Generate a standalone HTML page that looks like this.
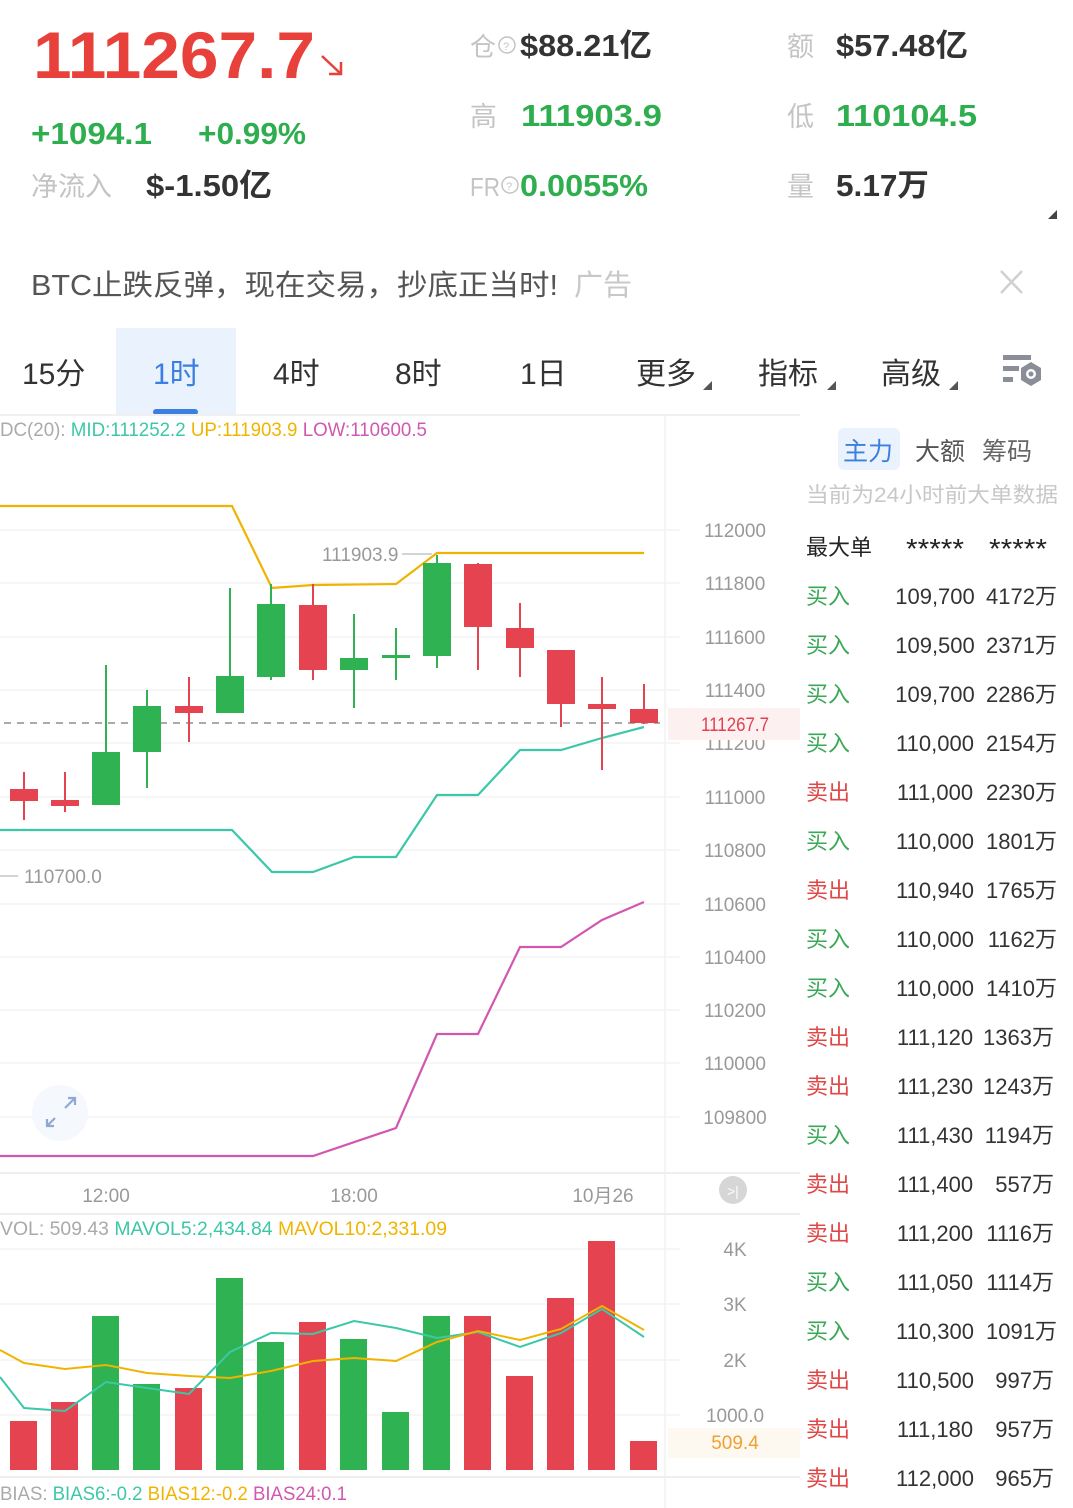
<!DOCTYPE html>
<html><head><meta charset="utf-8"><style>
html,body{margin:0;padding:0;background:#fff;width:1073px;height:1508px;overflow:hidden}
svg{display:block}
text{font-family:"Liberation Sans","Noto Sans CJK SC",sans-serif}
</style></head><body>
<svg width="1073" height="1508" viewBox="0 0 1073 1508" xmlns="http://www.w3.org/2000/svg">
<!-- header -->
<text x="33" y="78" font-size="66" font-weight="bold" fill="#e8403a" textLength="282" lengthAdjust="spacingAndGlyphs">111267.7</text>
<path d="M322 56 L341 74 M341 62 V74 H329" stroke="#e8403a" stroke-width="2.5" fill="none"/>
<text x="31" y="144" font-size="31" font-weight="bold" fill="#2fae4f" textLength="121" lengthAdjust="spacingAndGlyphs">+1094.1</text>
<text x="198" y="144" font-size="31" font-weight="bold" fill="#2fae4f" textLength="108" lengthAdjust="spacingAndGlyphs">+0.99%</text>
<text x="31" y="196" font-size="27" fill="#c4c4c4">净流入</text>
<text x="146" y="196" font-size="31" font-weight="bold" fill="#333" textLength="126" lengthAdjust="spacingAndGlyphs">$-1.50亿</text>

<text x="470" y="56" font-size="26" fill="#c4c4c4">仓</text>
<circle cx="507" cy="45" r="8" fill="none" stroke="#c4c4c4" stroke-width="1.5"/><text x="503" y="50" font-size="11" fill="#c4c4c4">?</text>
<text x="520" y="56" font-size="31" font-weight="bold" fill="#333" textLength="132" lengthAdjust="spacingAndGlyphs">$88.21亿</text>
<text x="470" y="126" font-size="27" fill="#c4c4c4">高</text>
<text x="521" y="126" font-size="31" font-weight="bold" fill="#2fae4f" textLength="141" lengthAdjust="spacingAndGlyphs">111903.9</text>
<text x="470" y="196" font-size="26" fill="#c4c4c4" textLength="30" lengthAdjust="spacingAndGlyphs">FR</text>
<circle cx="510" cy="185" r="8" fill="none" stroke="#c4c4c4" stroke-width="1.5"/><text x="506" y="190" font-size="11" fill="#c4c4c4">?</text>
<text x="520" y="196" font-size="31" font-weight="bold" fill="#2fae4f" textLength="128" lengthAdjust="spacingAndGlyphs">0.0055%</text>

<text x="787" y="56" font-size="27" fill="#c4c4c4">额</text>
<text x="836" y="56" font-size="31" font-weight="bold" fill="#333" textLength="132" lengthAdjust="spacingAndGlyphs">$57.48亿</text>
<text x="787" y="126" font-size="27" fill="#c4c4c4">低</text>
<text x="836" y="126" font-size="31" font-weight="bold" fill="#2fae4f" textLength="141" lengthAdjust="spacingAndGlyphs">110104.5</text>
<text x="787" y="196" font-size="27" fill="#c4c4c4">量</text>
<text x="836" y="196" font-size="31" font-weight="bold" fill="#333" textLength="93" lengthAdjust="spacingAndGlyphs">5.17万</text>
<path d="M1057 210 L1057 219 L1048 219 Z" fill="#444"/>

<text x="31" y="295" font-size="29" fill="#555" textLength="527" lengthAdjust="spacingAndGlyphs">BTC止跌反弹，现在交易，抄底正当时!</text>
<text x="574" y="295" font-size="29" fill="#c8c8c8">广告</text>
<path d="M1001 271 L1022 293 M1022 271 L1001 293" stroke="#d0d0d0" stroke-width="2.5"/>

<!-- tabs -->
<rect x="116" y="328" width="120" height="86" fill="#eaf2fd"/>
<rect x="153" y="409" width="45" height="6" rx="3" fill="#3b7fe0"/>
<g font-size="30" fill="#333">
<text x="22" y="384">15分</text>
<text x="153" y="384" fill="#3b7fe0">1时</text>
<text x="273" y="384">4时</text>
<text x="395" y="384">8时</text>
<text x="520" y="384">1日</text>
<text x="636" y="384">更多</text>
<text x="758" y="384">指标</text>
<text x="881" y="384">高级</text>
</g>
<path d="M712 381 V390 H703 Z M836 381 V390 H827 Z M958 381 V390 H949 Z" fill="#555"/>
<g fill="#8a8e99"><rect x="1003" y="355" width="28" height="5"/><rect x="1003" y="366" width="16" height="5"/><rect x="1003" y="377" width="10" height="5"/></g>
<path d="M1031 362 L1041 368 V380 L1031 386 L1021 380 V368 Z" fill="#8a8e99"/>
<circle cx="1031" cy="374" r="5" fill="#fff"/><circle cx="1031" cy="374" r="2.5" fill="#8a8e99"/>

<!-- separators -->
<line x1="0" y1="415" x2="800" y2="415" stroke="#f0f0f0" stroke-width="2"/>
<line x1="665" y1="415" x2="665" y2="1508" stroke="#f2f2f2" stroke-width="1.5"/>

<text x="0" y="436" font-size="19" fill="#aaa" textLength="427" lengthAdjust="spacingAndGlyphs"><tspan>DC(20): </tspan><tspan fill="#3cc8a8">MID:111252.2 </tspan><tspan fill="#f0b400">UP:111903.9 </tspan><tspan fill="#d058b0">LOW:110600.5</tspan></text>

<!-- grid -->
<g stroke="#f3f3f3" stroke-width="1.5">
<line x1="0" y1="530" x2="680" y2="530"/><line x1="0" y1="583" x2="680" y2="583"/><line x1="0" y1="637" x2="680" y2="637"/><line x1="0" y1="690" x2="680" y2="690"/><line x1="0" y1="743" x2="680" y2="743"/><line x1="0" y1="797" x2="680" y2="797"/><line x1="0" y1="850" x2="680" y2="850"/><line x1="0" y1="904" x2="680" y2="904"/><line x1="0" y1="957" x2="680" y2="957"/><line x1="0" y1="1010" x2="680" y2="1010"/><line x1="0" y1="1063" x2="680" y2="1063"/><line x1="0" y1="1117" x2="680" y2="1117"/>
<line x1="0" y1="1173" x2="800" y2="1173" stroke="#eee" stroke-width="2"/>
<line x1="0" y1="1214" x2="800" y2="1214" stroke="#eee" stroke-width="2"/>
<line x1="0" y1="1249" x2="680" y2="1249"/><line x1="0" y1="1304" x2="680" y2="1304"/><line x1="0" y1="1360" x2="680" y2="1360"/><line x1="0" y1="1415" x2="680" y2="1415"/>
<line x1="0" y1="1477" x2="800" y2="1477" stroke="#eee" stroke-width="2"/>
</g>
<g font-size="19" fill="#999" text-anchor="middle">
<text x="735" y="537">112000</text><text x="735" y="590">111800</text><text x="735" y="644">111600</text><text x="735" y="697">111400</text><text x="735" y="750">111200</text><text x="735" y="804">111000</text><text x="735" y="857">110800</text><text x="735" y="911">110600</text><text x="735" y="964">110400</text><text x="735" y="1017">110200</text><text x="735" y="1070">110000</text><text x="735" y="1124">109800</text>
<text x="106" y="1202">12:00</text><text x="354" y="1202">18:00</text><text x="603" y="1202">10月26</text>
<text x="735" y="1256">4K</text><text x="735" y="1311">3K</text><text x="735" y="1367">2K</text><text x="735" y="1422">1000.0</text>
</g>
<rect x="668" y="708" width="132" height="32" fill="#fdf0f0"/>
<text x="735" y="731" font-size="19" fill="#e04050" text-anchor="middle" textLength="68" lengthAdjust="spacingAndGlyphs">111267.7</text>
<rect x="668" y="1428" width="132" height="30" fill="#fdf8f0"/>
<text x="735" y="1449" font-size="19" fill="#f0a030" text-anchor="middle">509.4</text>
<circle cx="733" cy="1190" r="14" fill="#d6d6d6"/><text x="727" y="1196" font-size="14" fill="#fff">&gt;|</text>

<!-- DC lines -->
<polyline points="0,506 232,506 272,588 313,585 396,584 437,553 644,553" fill="none" stroke="#f0b400" stroke-width="2.2"/>
<polyline points="0,830 232,830 272,872 313,872 354,857 396,857 437,795 478,795 520,750 561,750 602,738 644,727" fill="none" stroke="#3cc8a8" stroke-width="2.2"/>
<polyline points="0,1156 313,1156 396,1128 437,1034 478,1034 520,947 561,947 602,920 644,902" fill="none" stroke="#d058b0" stroke-width="2.2"/>
<line x1="4" y1="723" x2="660" y2="723" stroke="#aaa" stroke-width="2" stroke-dasharray="7,6"/>
<text x="322" y="561" font-size="19" fill="#999">111903.9</text><line x1="402" y1="554" x2="432" y2="554" stroke="#aaa"/>
<line x1="0" y1="876" x2="18" y2="876" stroke="#aaa"/><text x="24" y="883" font-size="19" fill="#999">110700.0</text>

<!-- candles -->
<g>
<g fill="#e5434f" stroke="#e5434f">
<line x1="24" y1="772" x2="24" y2="820" stroke-width="2"/><rect x="10" y="789" width="28" height="12" stroke="none"/>
<line x1="65" y1="772" x2="65" y2="812" stroke-width="2"/><rect x="51" y="800" width="28" height="6" stroke="none"/>
<line x1="189" y1="677" x2="189" y2="742" stroke-width="2"/><rect x="175" y="706" width="28" height="7" stroke="none"/>
<line x1="313" y1="584" x2="313" y2="680" stroke-width="2"/><rect x="299" y="605" width="28" height="65" stroke="none"/>
<line x1="478" y1="563" x2="478" y2="670" stroke-width="2"/><rect x="464" y="564" width="28" height="63" stroke="none"/>
<line x1="520" y1="603" x2="520" y2="677" stroke-width="2"/><rect x="506" y="628" width="28" height="20" stroke="none"/>
<line x1="561" y1="650" x2="561" y2="727" stroke-width="2"/><rect x="547" y="650" width="28" height="54" stroke="none"/>
<line x1="602" y1="677" x2="602" y2="770" stroke-width="2"/><rect x="588" y="704" width="28" height="5" stroke="none"/>
<line x1="644" y1="684" x2="644" y2="724" stroke-width="2"/><rect x="630" y="709" width="28" height="14" stroke="none"/>
</g>
<g fill="#2fb352" stroke="#2fb352">
<line x1="106" y1="665" x2="106" y2="805" stroke-width="2"/><rect x="92" y="752" width="28" height="53" stroke="none"/>
<line x1="147" y1="690" x2="147" y2="788" stroke-width="2"/><rect x="133" y="706" width="28" height="46" stroke="none"/>
<line x1="230" y1="588" x2="230" y2="713" stroke-width="2"/><rect x="216" y="676" width="28" height="37" stroke="none"/>
<line x1="271" y1="584" x2="271" y2="680" stroke-width="2"/><rect x="257" y="604" width="28" height="73" stroke="none"/>
<line x1="354" y1="614" x2="354" y2="708" stroke-width="2"/><rect x="340" y="658" width="28" height="12" stroke="none"/>
<line x1="396" y1="628" x2="396" y2="680" stroke-width="2"/><rect x="382" y="655" width="28" height="3" stroke="none"/>
<line x1="437" y1="555" x2="437" y2="668" stroke-width="2"/><rect x="423" y="563" width="28" height="93" stroke="none"/>
</g>
</g>
<!-- expand icon -->
<circle cx="60" cy="1113" r="28" fill="#f5f8fd"/>
<path d="M65 1108 L75 1098 M68 1098 H75 V1105 M55 1118 L47 1126 M47 1119 V1126 H54" stroke="#8fa8d4" stroke-width="2.2" fill="none"/>

<!-- volume -->
<text x="0" y="1235" font-size="19" fill="#aaa" textLength="447" lengthAdjust="spacingAndGlyphs"><tspan>VOL: 509.43 </tspan><tspan fill="#3cc8a8">MAVOL5:2,434.84 </tspan><tspan fill="#f0b400">MAVOL10:2,331.09</tspan></text>
<g fill="#e5434f">
<rect x="10" y="1421" width="27" height="49"/><rect x="51" y="1402" width="27" height="68"/><rect x="175" y="1388" width="27" height="82"/><rect x="299" y="1322" width="27" height="148"/><rect x="464" y="1316" width="27" height="154"/><rect x="506" y="1376" width="27" height="94"/><rect x="547" y="1298" width="27" height="172"/><rect x="588" y="1241" width="27" height="229"/><rect x="630" y="1441" width="27" height="29"/>
</g>
<g fill="#2fb352">
<rect x="92" y="1316" width="27" height="154"/><rect x="133" y="1384" width="27" height="86"/><rect x="216" y="1278" width="27" height="192"/><rect x="257" y="1342" width="27" height="128"/><rect x="340" y="1339" width="27" height="131"/><rect x="382" y="1412" width="27" height="58"/><rect x="423" y="1316" width="27" height="154"/>
</g>
<polyline points="0,1377 24,1408 65,1411 106,1382 147,1388 189,1394 230,1352 271,1333 313,1334 354,1321 396,1328 437,1338 478,1332 520,1347 561,1333 602,1309 644,1337" fill="none" stroke="#3cc8a8" stroke-width="2"/>
<polyline points="0,1350 24,1363 65,1369 106,1365 147,1373 189,1376 230,1378 271,1371 313,1361 354,1358 396,1361 437,1342 478,1331 520,1340 561,1329 602,1306 644,1330" fill="none" stroke="#f0b400" stroke-width="2"/>
<text x="0" y="1500" font-size="19" fill="#aaa" textLength="347" lengthAdjust="spacingAndGlyphs"><tspan>BIAS: </tspan><tspan fill="#3cc8a8">BIAS6:-0.2 </tspan><tspan fill="#f0b400">BIAS12:-0.2 </tspan><tspan fill="#d058b0">BIAS24:0.1</tspan></text>

<!-- right panel -->
<rect x="838" y="428" width="62" height="42" rx="6" fill="#eaf2fd"/>
<text x="843" y="460" font-size="25" fill="#3b7fe0">主力</text>
<text x="915" y="460" font-size="25" fill="#555">大额</text>
<text x="982" y="460" font-size="25" fill="#666">筹码</text>
<text x="806" y="502" font-size="21" fill="#c8c8c8" textLength="252" lengthAdjust="spacingAndGlyphs">当前为24小时前大单数据</text>
<text x="806" y="555" font-size="22" fill="#222">最大单</text>
<text x="935" y="558" font-size="28" fill="#222" text-anchor="middle" textLength="58" lengthAdjust="spacingAndGlyphs">*****</text>
<text x="1018" y="558" font-size="28" fill="#222" text-anchor="middle" textLength="58" lengthAdjust="spacingAndGlyphs">*****</text>
<g font-size="22">
<text x="806" y="604" fill="#3aa856">买入</text><text x="935" y="604" fill="#333" text-anchor="middle">109,700</text><text x="1057" y="604" fill="#333" text-anchor="end">4172万</text>
<text x="806" y="653" fill="#3aa856">买入</text><text x="935" y="653" fill="#333" text-anchor="middle">109,500</text><text x="1057" y="653" fill="#333" text-anchor="end">2371万</text>
<text x="806" y="702" fill="#3aa856">买入</text><text x="935" y="702" fill="#333" text-anchor="middle">109,700</text><text x="1057" y="702" fill="#333" text-anchor="end">2286万</text>
<text x="806" y="751" fill="#3aa856">买入</text><text x="935" y="751" fill="#333" text-anchor="middle">110,000</text><text x="1057" y="751" fill="#333" text-anchor="end">2154万</text>
<text x="806" y="800" fill="#e04848">卖出</text><text x="935" y="800" fill="#333" text-anchor="middle">111,000</text><text x="1057" y="800" fill="#333" text-anchor="end">2230万</text>
<text x="806" y="849" fill="#3aa856">买入</text><text x="935" y="849" fill="#333" text-anchor="middle">110,000</text><text x="1057" y="849" fill="#333" text-anchor="end">1801万</text>
<text x="806" y="898" fill="#e04848">卖出</text><text x="935" y="898" fill="#333" text-anchor="middle">110,940</text><text x="1057" y="898" fill="#333" text-anchor="end">1765万</text>
<text x="806" y="947" fill="#3aa856">买入</text><text x="935" y="947" fill="#333" text-anchor="middle">110,000</text><text x="1057" y="947" fill="#333" text-anchor="end">1162万</text>
<text x="806" y="996" fill="#3aa856">买入</text><text x="935" y="996" fill="#333" text-anchor="middle">110,000</text><text x="1057" y="996" fill="#333" text-anchor="end">1410万</text>
<text x="806" y="1045" fill="#e04848">卖出</text><text x="935" y="1045" fill="#333" text-anchor="middle">111,120</text><text x="1054" y="1045" fill="#333" text-anchor="end">1363万</text>
<text x="806" y="1094" fill="#e04848">卖出</text><text x="935" y="1094" fill="#333" text-anchor="middle">111,230</text><text x="1054" y="1094" fill="#333" text-anchor="end">1243万</text>
<text x="806" y="1143" fill="#3aa856">买入</text><text x="935" y="1143" fill="#333" text-anchor="middle">111,430</text><text x="1054" y="1143" fill="#333" text-anchor="end">1194万</text>
<text x="806" y="1192" fill="#e04848">卖出</text><text x="935" y="1192" fill="#333" text-anchor="middle">111,400</text><text x="1054" y="1192" fill="#333" text-anchor="end">557万</text>
<text x="806" y="1241" fill="#e04848">卖出</text><text x="935" y="1241" fill="#333" text-anchor="middle">111,200</text><text x="1054" y="1241" fill="#333" text-anchor="end">1116万</text>
<text x="806" y="1290" fill="#3aa856">买入</text><text x="935" y="1290" fill="#333" text-anchor="middle">111,050</text><text x="1054" y="1290" fill="#333" text-anchor="end">1114万</text>
<text x="806" y="1339" fill="#3aa856">买入</text><text x="935" y="1339" fill="#333" text-anchor="middle">110,300</text><text x="1057" y="1339" fill="#333" text-anchor="end">1091万</text>
<text x="806" y="1388" fill="#e04848">卖出</text><text x="935" y="1388" fill="#333" text-anchor="middle">110,500</text><text x="1054" y="1388" fill="#333" text-anchor="end">997万</text>
<text x="806" y="1437" fill="#e04848">卖出</text><text x="935" y="1437" fill="#333" text-anchor="middle">111,180</text><text x="1054" y="1437" fill="#333" text-anchor="end">957万</text>
<text x="806" y="1486" fill="#e04848">卖出</text><text x="935" y="1486" fill="#333" text-anchor="middle">112,000</text><text x="1054" y="1486" fill="#333" text-anchor="end">965万</text>
</g>
</svg>
</body></html>
